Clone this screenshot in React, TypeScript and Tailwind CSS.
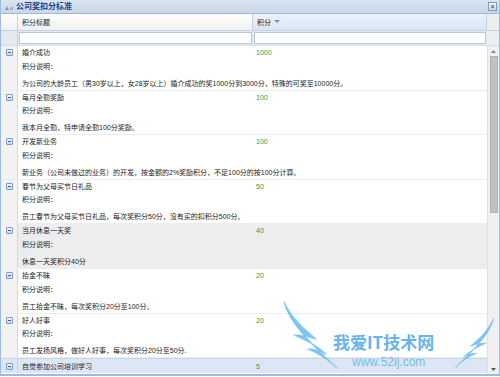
import React from "react";

type Row = { title: string; value: string; desc: string; h: string; bg: string };

const rows: Row[] = [
  { title: "婚介成功", value: "1000", desc: "为公司的大龄员工（男30岁以上，女28岁以上）婚介成功的奖1000分到3000分，特殊的可奖至10000分。", h: "h-[45px]", bg: "bg-white" },
  { title: "每月全勤奖励", value: "100", desc: "我本月全勤，特申请全勤100分奖励。", h: "h-[44px]", bg: "bg-white" },
  { title: "开发新业务", value: "100", desc: "新业务（公司未做过的业务）的开发，按金额的2%奖励积分，不足100分的按100分计算。", h: "h-[45px]", bg: "bg-white" },
  { title: "春节为父母买节日礼品", value: "50", desc: "员工春节为父母买节日礼品，每次奖积分50分，没有买的扣积分500分。", h: "h-[44px]", bg: "bg-white" },
  { title: "当月休息一天奖", value: "40", desc: "休息一天奖积分40分", h: "h-[45px]", bg: "bg-[#ededed]" },
  { title: "拾金不昧", value: "20", desc: "员工拾金不昧，每次奖积分20分至100分。", h: "h-[45px]", bg: "bg-white" },
  { title: "好人好事", value: "20", desc: "员工发扬风格，做好人好事，每次奖积分20分至50分.", h: "h-[44px]", bg: "bg-white" },
];

function ToggleIcon() {
  return (
    <div className="w-[7px] h-[7px] border border-[#7f9bc4] bg-gradient-to-b from-[#f4f8fd] to-[#c9d8ee] flex items-center justify-center rounded-[1px]">
      <div className="w-[3px] h-px bg-[#3b5f99]" />
    </div>
  );
}

function Wing({ flip, w, h }: { flip?: boolean; w: number; h: number }) {
  return (
    <svg width={w} height={h} viewBox="0 0 56 68" preserveAspectRatio="none" className={flip ? "-scale-x-100" : ""}>
      <path
        d="M2 1 C 8 22, 26 40, 55 67 C 46 58, 36 52, 26 48 C 32 48, 38 50, 44 53 C 34 44, 22 38, 12 34 C 20 34, 28 36, 34 38 C 22 28, 10 18, 2 1 Z"
        fill="#6cbaf2"
        fillOpacity="0.85"
        stroke="#6cbaf2"
        strokeOpacity="0.6"
        strokeWidth="1.5"
        strokeLinejoin="round"
      />
    </svg>
  );
}

export default function App() {
  return (
    <div className="relative w-[500px] h-[377px] overflow-hidden bg-white text-[7px] leading-none text-[#222]" style={{ fontFamily: '"Liberation Sans", "Noto Sans CJK SC", sans-serif' }}>
      <div className="h-[376px] border-x border-b-2 border-[#99bbe8] flex flex-col">
        {/* Title bar */}
        <div className="h-[14px] flex items-center bg-gradient-to-b from-[#dbe5f1] to-[#cad7e7] border-b border-[#99bbe8] shrink-0">
          <div className="w-[15px] flex items-center justify-center">
            <svg width="8" height="6" viewBox="0 0 8 6">
              <path d="M0 6 L2 2 L4 6 Z" fill="#8a9bb0" />
              <rect x="5" y="3" width="3" height="3" fill="#a5b3c4" />
            </svg>
          </div>
          <span className="text-[8px] font-bold text-[#15428b]">公司奖扣分标准</span>
          <div className="ml-auto mr-[2px] w-[9px] h-[9px] border border-[#7f9bc4] bg-gradient-to-b from-[#f2f6fc] to-[#cddcf0] flex items-center justify-center text-[7px] text-[#3b5f99] font-bold">×</div>
        </div>
        {/* Header */}
        <div className="h-[17px] flex shrink-0 border-b border-[#c5d3e6] bg-gradient-to-b from-white to-[#f0f0f0]">
          <div className="w-[17px] border-r border-[#d0d0d0]" />
          <div className="w-[235px] border-r border-[#d0d0d0] flex items-center pl-[4px]">积分标题</div>
          <div className="flex-1 flex items-center pl-[4px] bg-gradient-to-b from-[#ebf3fd] to-[#dae6f5] border-r border-[#c5d3e6]">
            积分
            <svg width="6" height="4" viewBox="0 0 6 4" className="ml-[3px]"><path d="M0 0 H6 L3 3 Z" fill="#6f8fc0" /></svg>
          </div>
          <div className="w-[12px] bg-[#eeeeee]" />
        </div>
        {/* Filter row */}
        <div className="h-[15px] flex shrink-0 bg-[#e4e9f1] border-b border-[#d8dee8]">
          <div className="w-[17px] border-r border-[#d0d0d0]" />
          <div className="w-[235px] px-[1px] py-[1px] flex">
            <div className="flex-1 bg-white border border-[#b8c8de]" />
          </div>
          <div className="flex-1 px-[1px] py-[1px] flex">
            <div className="flex-1 bg-white border border-[#b8c8de]" />
          </div>
          <div className="w-[12px] bg-[#eeeeee]" />
        </div>
        {/* Body */}
        <div className="flex-1 flex min-h-0">
          <div className="flex-1 flex flex-col overflow-hidden">
            {rows.map((r) => (
              <div key={r.title} className={`${r.h} ${r.bg} flex shrink-0 border-b border-[#ededed]`}>
                <div className="w-[17px] bg-[#f2f2f2] border-r border-[#d8d8d8] flex justify-center pt-[3px]">
                  <ToggleIcon />
                </div>
                <div className="flex-1 flex flex-col">
                  <div className="flex h-[13px] items-center">
                    <div className="w-[235px] pl-[4px] whitespace-nowrap">{r.title}</div>
                    <div className="pl-[3px] text-[#3a9a3a]">{r.value}</div>
                  </div>
                  <div className="h-[14px] flex items-center pl-[4px]">积分说明：</div>
                  <div className="h-[14px] mt-[3px] flex items-center pl-[4px] whitespace-nowrap">{r.desc}</div>
                </div>
              </div>
            ))}
            <div className="h-[15px] flex shrink-0 bg-[#dde6f4] border-t border-[#c8d5e8]">
              <div className="w-[17px] border-r border-[#c8d5e8] flex justify-center items-center">
                <ToggleIcon />
              </div>
              <div className="flex items-center">
                <div className="w-[235px] pl-[4px]">自觉参加公司培训学习</div>
                <div className="pl-[3px] text-[#3a9a3a]">5</div>
              </div>
            </div>
          </div>
          {/* Scrollbar */}
          <div className="w-[12px] bg-[#f0f0f0] border-l border-[#e0e0e0] flex flex-col items-center shrink-0">
            <div className="h-[10px] flex items-center justify-center">
              <svg width="5" height="3" viewBox="0 0 5 3"><path d="M0 3 L2.5 0 L5 3 Z" fill="#888" /></svg>
            </div>
            <div className="w-[8px] h-[157px] bg-[#c1c1c1] border border-[#b0b0b0]" />
            <div className="flex-1" />
            <div className="h-[10px] flex items-center justify-center">
              <svg width="5" height="3" viewBox="0 0 5 3"><path d="M0 0 L2.5 3 L5 0 Z" fill="#555" /></svg>
            </div>
          </div>
        </div>
      </div>
      {/* Watermark */}
      <div className="absolute left-[282px] top-[301px] pointer-events-none">
        <Wing w={56} h={68} />
      </div>
      <div className="absolute left-[455px] top-[318px] pointer-events-none">
        <Wing flip w={40} h={50} />
      </div>
      <div className="absolute left-[333px] top-[333px] pointer-events-none text-[17px] font-bold text-[#4aa8ee] opacity-85 leading-none whitespace-nowrap" style={{ fontFamily: '"Noto Sans CJK SC", sans-serif' }}>
        我爱IT技术网
      </div>
      <div className="absolute left-[352px] top-[356px] pointer-events-none text-[12px] text-[#5ab4f0] opacity-80 leading-none whitespace-nowrap" style={{ fontFamily: '"Liberation Sans", sans-serif' }}>
        www.52ij.com
      </div>
    </div>
  );
}
